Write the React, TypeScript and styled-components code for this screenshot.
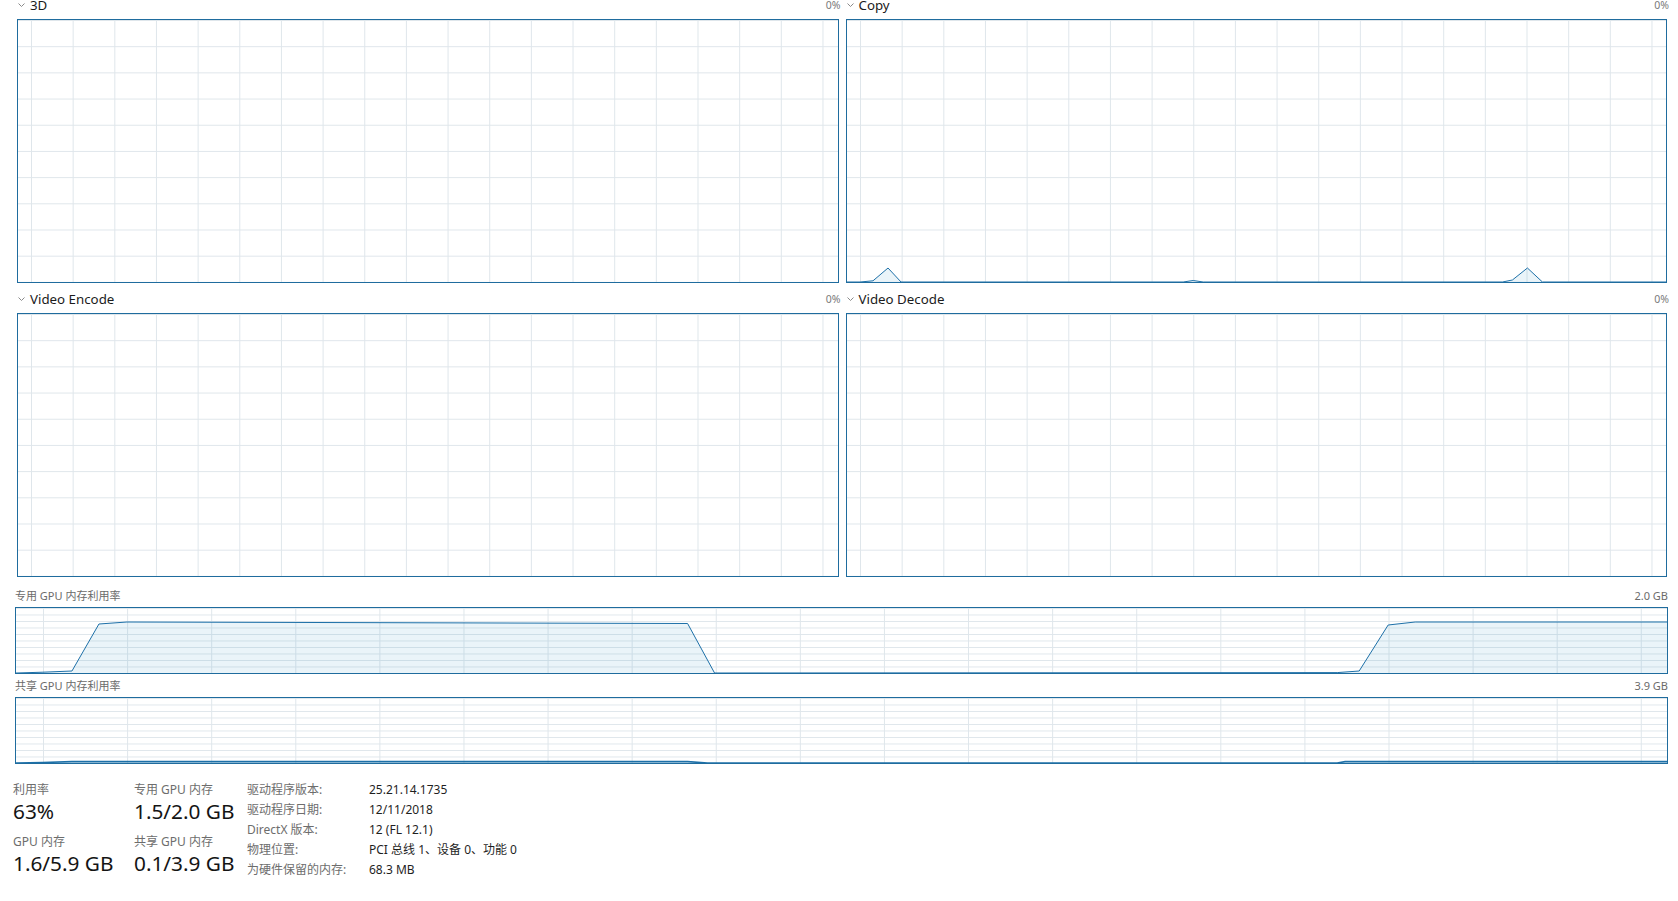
import React from "react";
import styled, { createGlobalStyle } from "styled-components";

const FONT = `"Noto Sans", "Noto Sans CJK SC", sans-serif`;

const GlobalStyle = createGlobalStyle`
  html, body { margin: 0; padding: 0; background: #ffffff; }
  body { font-family: ${FONT}; overflow: hidden; }
`;

const Page = styled.div`
  width: 1678px;
  height: 901px;
  box-sizing: border-box;
  padding: 0 10px 0 13px;
  overflow: hidden;
  display: flex;
  flex-direction: column;
  background: #ffffff;
`;

const EngineGrid = styled.div`
  margin: -11px 1px 0 4px;
  display: grid;
  grid-template-columns: 1fr 1fr;
  column-gap: 7px;
`;

const Panel = styled.section`
  display: flex;
  flex-direction: column;
  min-width: 0;
`;

const PanelHeader = styled.div`
  height: 30px;
  box-sizing: border-box;
  padding-top: 1px;
  margin-right: -2px;
  display: flex;
  align-items: center;
`;

const ChevronIcon = styled.svg`
  display: block;
  margin-left: 1px;
  flex: none;
`;

const Title = styled.span`
  margin-left: 5px;
  flex: 1;
  font-size: 13.3px;
  color: #1b1b1b;
  white-space: nowrap;
`;

const Scale = styled.span`
  font-size: 10.5px;
  color: #7a7a7a;
  white-space: nowrap;
`;

const ChartBox = styled.div<{ $h: number; $cellW: number; $offsetX: number }>`
  height: ${(p) => p.$h}px;
  box-sizing: border-box;
  border: 1px solid #1f6c9e;
  background-color: #ffffff;
  background-image: linear-gradient(to right, #dfe6eb 1px, transparent 1px),
    linear-gradient(to bottom, #dfe6eb 1px, transparent 1px);
  background-size: ${(p) => p.$cellW}px 100%, 100% 10%;
  background-position: ${(p) => p.$offsetX}px 0, 0 0;
  background-repeat: repeat-x, repeat-y;
  overflow: hidden;
`;

const PlotSvg = styled.svg`
  display: block;
  width: 100%;
  height: 100%;
`;

const MemorySection = styled.div`
  margin: 0 0 0 2px;
  display: flex;
  flex-direction: column;
`;

const MemHeader = styled.div<{ $top: number }>`
  margin-top: ${(p) => p.$top}px;
  margin-bottom: 4px;
  display: flex;
  justify-content: space-between;
  align-items: flex-end;
  font-size: 11px;
  line-height: 15px;
  color: #6b6b6b;
`;

const StatsRow = styled.div`
  margin-top: 16px;
  display: grid;
  grid-template-columns: 121px 113px auto;
  align-items: start;
`;

const StatCol = styled.div`
  padding-top: 2px;
  display: flex;
  flex-direction: column;
  gap: 10px;
`;

const StatBlock = styled.div`
  display: flex;
  flex-direction: column;
`;

const StatLabel = styled.span`
  font-size: 12px;
  line-height: 16px;
  color: #6d6d6d;
  white-space: nowrap;
`;

const StatValue = styled.span`
  font-size: 20.8px;
  line-height: 26px;
  color: #141414;
  white-space: nowrap;
`;

const InfoGrid = styled.div`
  display: grid;
  grid-template-columns: 122px auto;
  font-size: 12px;
  line-height: 20.1px;
`;

const InfoKey = styled.span`
  color: #6d6d6d;
  white-space: nowrap;
`;

const InfoVal = styled.span`
  color: #1f1f1f;
  white-space: nowrap;
`;

type Pt = [number, number];

function SeriesPlot({ w, h, pts, stroke = 1 }: { w: number; h: number; pts: Pt[]; stroke?: number }) {
  if (!pts.length) return null;
  const line = pts.map(([x, y], i) => `${i ? "L" : "M"}${x} ${y}`).join(" ");
  const area = `${line} L${w} ${h} L0 ${h} Z`;
  return (
    <PlotSvg viewBox={`0 0 ${w} ${h}`} preserveAspectRatio="none">
      <path d={area} fill="rgba(17,125,187,0.085)" />
      <path
        d={line}
        fill="none"
        stroke="#1d70a8"
        strokeWidth={stroke}
        strokeLinejoin="round"
        vectorEffect="non-scaling-stroke"
      />
    </PlotSvg>
  );
}

function Chevron() {
  return (
    <ChevronIcon width="7" height="4" viewBox="0 0 7 4">
      <polyline points="0.5,0.5 3.5,3.5 6.5,0.5" fill="none" stroke="#8a8a8a" strokeWidth="1" />
    </ChevronIcon>
  );
}

const EW = 819;
const EH = 262;

const copyPts: Pt[] = [
  [0, EH],
  [13, EH],
  [26, EH - 1.2],
  [41, EH - 14],
  [54, EH],
  [336, EH],
  [346, EH - 1.5],
  [356, EH],
  [655, EH],
  [665, EH - 2],
  [680, EH - 14],
  [695, EH],
  [EW, EH],
];

const engines: { title: string; pts: Pt[] }[] = [
  { title: "3D", pts: [] },
  { title: "Copy", pts: copyPts },
  { title: "Video Encode", pts: [] },
  { title: "Video Decode", pts: [] },
];

function EnginePanel({ title, pts }: { title: string; pts: Pt[] }) {
  return (
    <Panel>
      <PanelHeader>
        <Chevron />
        <Title>{title}</Title>
        <Scale>0%</Scale>
      </PanelHeader>
      <ChartBox $h={264} $cellW={41.67} $offsetX={13}>
        <SeriesPlot w={EW} h={EH} pts={pts} />
      </ChartBox>
    </Panel>
  );
}

const MW = 1652;
const MH = 65;

const dedicatedPts: Pt[] = [
  [0, MH],
  [27, 64.2],
  [56, 63],
  [83, 16],
  [111, 14],
  [672, 15.5],
  [699, MH],
  [1322, 64.6],
  [1344, 63],
  [1373, 17],
  [1400, 14],
  [MW, 14],
];

const sharedPts: Pt[] = [
  [0, MH],
  [27, 64.5],
  [56, 63.6],
  [672, 63.6],
  [692, MH],
  [1322, MH],
  [1330, 63.6],
  [MW, 63.6],
];

const info: [string, string][] = [
  ["驱动程序版本:", "25.21.14.1735"],
  ["驱动程序日期:", "12/11/2018"],
  ["DirectX 版本:", "12 (FL 12.1)"],
  ["物理位置:", "PCI 总线 1、设备 0、功能 0"],
  ["为硬件保留的内存:", "68.3 MB"],
];

export default function App() {
  return (
    <>
      <GlobalStyle />
      <Page>
        <EngineGrid>
          {engines.map((e) => (
            <EnginePanel key={e.title} title={e.title} pts={e.pts} />
          ))}
        </EngineGrid>

        <MemorySection>
          <MemHeader $top={11}>
            <span>专用 GPU 内存利用率</span>
            <span>2.0 GB</span>
          </MemHeader>
          <ChartBox $h={67} $cellW={84.1} $offsetX={27}>
            <SeriesPlot w={MW} h={MH} pts={dedicatedPts} />
          </ChartBox>
          <MemHeader $top={4}>
            <span>共享 GPU 内存利用率</span>
            <span>3.9 GB</span>
          </MemHeader>
          <ChartBox $h={67} $cellW={84.1} $offsetX={27}>
            <SeriesPlot w={MW} h={MH} pts={sharedPts} stroke={1.6} />
          </ChartBox>
        </MemorySection>

        <StatsRow>
          <StatCol>
            <StatBlock>
              <StatLabel>利用率</StatLabel>
              <StatValue>63%</StatValue>
            </StatBlock>
            <StatBlock>
              <StatLabel>GPU 内存</StatLabel>
              <StatValue>1.6/5.9 GB</StatValue>
            </StatBlock>
          </StatCol>
          <StatCol>
            <StatBlock>
              <StatLabel>专用 GPU 内存</StatLabel>
              <StatValue>1.5/2.0 GB</StatValue>
            </StatBlock>
            <StatBlock>
              <StatLabel>共享 GPU 内存</StatLabel>
              <StatValue>0.1/3.9 GB</StatValue>
            </StatBlock>
          </StatCol>
          <InfoGrid>
            {info.map(([k, v]) => (
              <React.Fragment key={k}>
                <InfoKey>{k}</InfoKey>
                <InfoVal>{v}</InfoVal>
              </React.Fragment>
            ))}
          </InfoGrid>
        </StatsRow>
      </Page>
    </>
  );
}
